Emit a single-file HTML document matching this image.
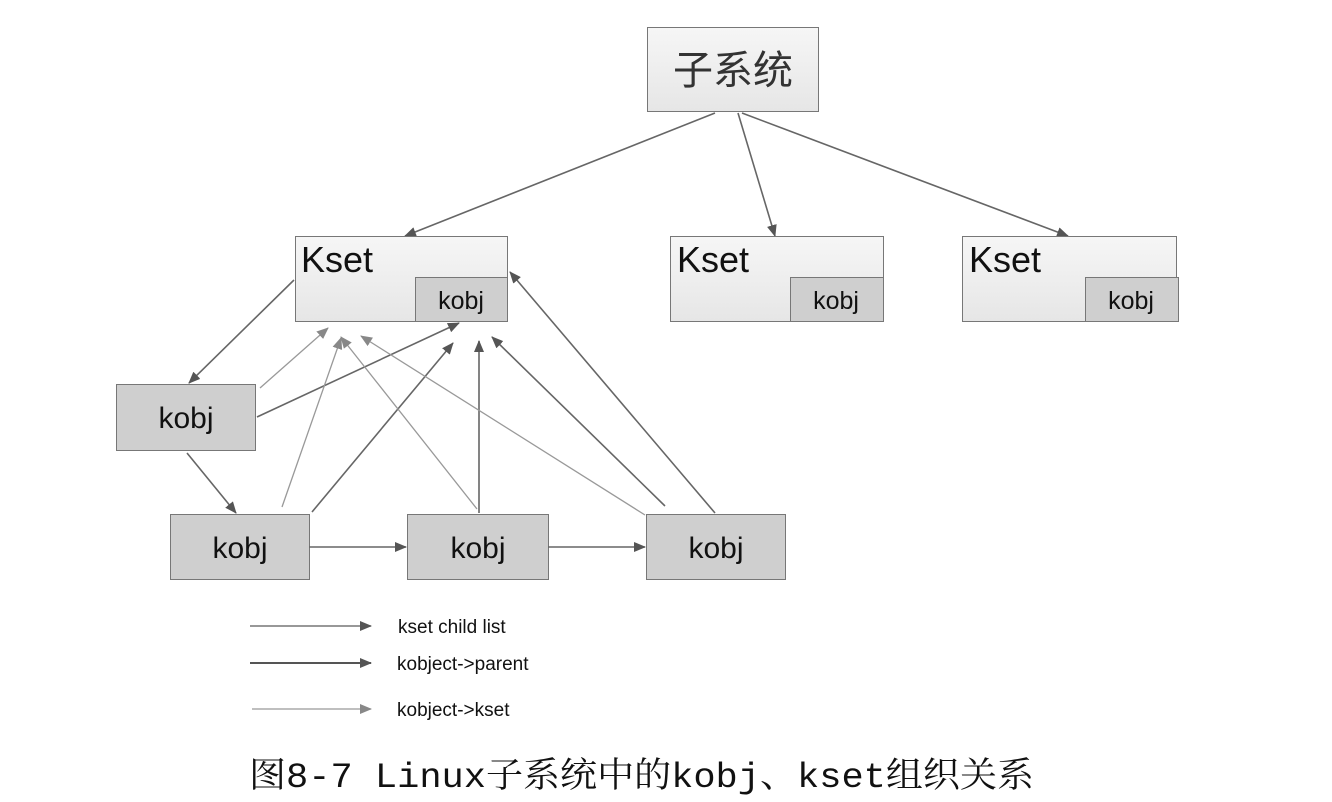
<!DOCTYPE html>
<html><head><meta charset="utf-8"><style>
html,body{margin:0;padding:0;background:#fff;width:1332px;height:802px;overflow:hidden}
svg{display:block}
.s{font-family:"Liberation Sans",Arial,sans-serif;fill:#111}
</style></head><body>
<svg width="1332" height="802" viewBox="0 0 1332 802">
<defs>
<linearGradient id="g" x1="0" y1="0" x2="0" y2="1"><stop offset="0" stop-color="#f6f6f6"/><stop offset="1" stop-color="#e6e6e6"/></linearGradient>
<marker id="ad" markerWidth="12" markerHeight="10" refX="11" refY="5" orient="auto" markerUnits="userSpaceOnUse"><path d="M0,0 L12,5 L0,10 z" fill="#555"/></marker>
<marker id="al" markerWidth="12" markerHeight="10" refX="11" refY="5" orient="auto" markerUnits="userSpaceOnUse"><path d="M0,0 L12,5 L0,10 z" fill="#888"/></marker>
</defs>
<rect x="647.5" y="27.5" width="171" height="84" fill="url(#g)" stroke="#777"/>
<text x="733" y="84" text-anchor="middle" font-size="40" font-family="'Noto Sans CJK SC',sans-serif" fill="#333">子系统</text>

<g stroke="#666" stroke-width="1.6" fill="none" marker-end="url(#ad)">
<line x1="715" y1="113" x2="405" y2="236"/>
<line x1="738" y1="113" x2="775" y2="236"/>
<line x1="742" y1="113" x2="1068" y2="236"/>
</g>

<rect x="295.5" y="236.5" width="212" height="85" fill="url(#g)" stroke="#777"/>
<rect x="415.5" y="277.5" width="92" height="44" fill="#cfcfcf" stroke="#777"/>
<text class="s" x="301" y="272" font-size="36">Kset</text>
<text class="s" x="461" y="309" font-size="25" text-anchor="middle">kobj</text>

<rect x="670.5" y="236.5" width="213" height="85" fill="url(#g)" stroke="#777"/>
<rect x="790.5" y="277.5" width="93" height="44" fill="#cfcfcf" stroke="#777"/>
<text class="s" x="677" y="272" font-size="36">Kset</text>
<text class="s" x="836" y="309" font-size="25" text-anchor="middle">kobj</text>

<rect x="962.5" y="236.5" width="214" height="85" fill="url(#g)" stroke="#777"/>
<rect x="1085.5" y="277.5" width="93" height="44" fill="#cfcfcf" stroke="#777"/>
<text class="s" x="969" y="272" font-size="36">Kset</text>
<text class="s" x="1131" y="309" font-size="25" text-anchor="middle">kobj</text>

<rect x="116.5" y="384.5" width="139" height="66" fill="#cfcfcf" stroke="#777"/>
<text class="s" x="186" y="428" font-size="30" text-anchor="middle">kobj</text>
<rect x="170.5" y="514.5" width="139" height="65" fill="#cfcfcf" stroke="#777"/>
<text class="s" x="240" y="558" font-size="30" text-anchor="middle">kobj</text>
<rect x="407.5" y="514.5" width="141" height="65" fill="#cfcfcf" stroke="#777"/>
<text class="s" x="478" y="558" font-size="30" text-anchor="middle">kobj</text>
<rect x="646.5" y="514.5" width="139" height="65" fill="#cfcfcf" stroke="#777"/>
<text class="s" x="716" y="558" font-size="30" text-anchor="middle">kobj</text>

<g stroke="#666" stroke-width="1.6" fill="none" marker-end="url(#ad)">
<line x1="294" y1="280" x2="189" y2="383"/>
<line x1="187" y1="453" x2="236" y2="513"/>
<line x1="257" y1="417" x2="459" y2="323"/>
<line x1="312" y1="512" x2="453" y2="343"/>
<line x1="479" y1="513" x2="479" y2="341"/>
<line x1="665" y1="506" x2="492" y2="337"/>
<line x1="715" y1="513" x2="510" y2="272"/>
<line x1="309" y1="547" x2="406" y2="547"/>
<line x1="548" y1="547" x2="645" y2="547"/>
</g>
<g stroke="#999" stroke-width="1.3" fill="none" marker-end="url(#al)">
<line x1="260" y1="388" x2="328" y2="328"/>
<line x1="282" y1="507" x2="341" y2="338"/>
<line x1="477" y1="509" x2="341" y2="337"/>
<line x1="645" y1="515" x2="361" y2="336"/>
</g>

<line x1="250" y1="626" x2="371" y2="626" stroke="#777" stroke-width="1.5" marker-end="url(#ad)"/>
<line x1="250" y1="663" x2="371" y2="663" stroke="#555" stroke-width="2" marker-end="url(#ad)"/>
<line x1="252" y1="709" x2="371" y2="709" stroke="#999" stroke-width="1.3" marker-end="url(#al)"/>
<text class="s" x="398" y="633" font-size="19" fill="#333">kset child list</text>
<text class="s" x="397" y="670" font-size="19" fill="#333">kobject-&gt;parent</text>
<text class="s" x="397" y="716" font-size="19" fill="#333">kobject-&gt;kset</text>

<text x="249" y="787" font-size="35" font-family="'Liberation Mono','Noto Serif CJK SC',monospace" fill="#111" textLength="785" lengthAdjust="spacingAndGlyphs">图8-7 Linux子系统中的kobj、kset组织关系</text>
</svg>
</body></html>
